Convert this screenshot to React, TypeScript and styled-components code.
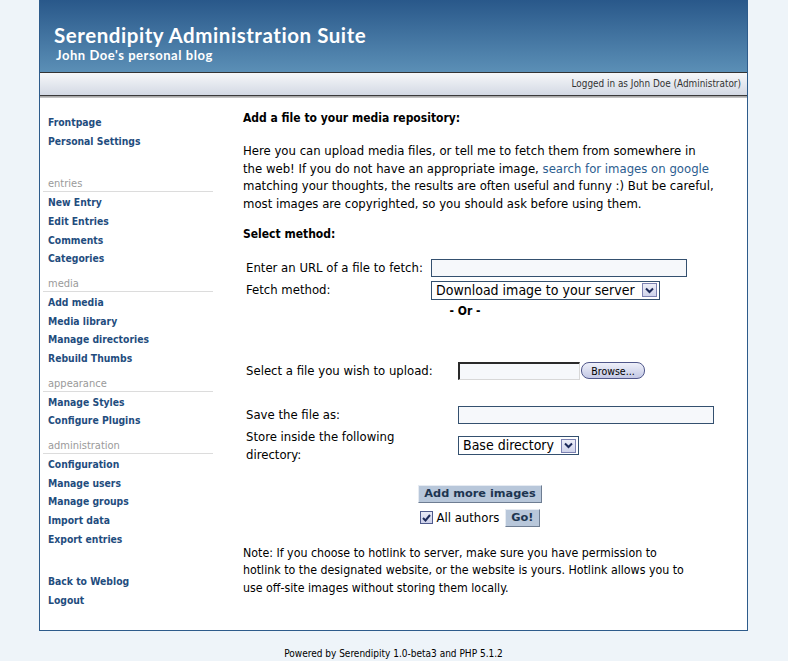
import React from "react";
import styled, { createGlobalStyle } from "styled-components";

const F = `"DejaVu Sans Condensed", "Liberation Sans", sans-serif`;
const TITLE = `Lato, "Open Sans", sans-serif`;

const Global = createGlobalStyle`
  html, body { margin: 0; padding: 0; background: #eef4f9; }
  body { font-family: ${F}; color: #000; overflow: hidden; }
  * { box-sizing: border-box; }
`;

const Page = styled.div`
  width: 709px;
  margin: 0 0 0 39px;
`;

const Frame = styled.div`
  border: 1px solid #2d5b8b;
  border-top: none;
  background: #fff;
`;

const Header = styled.div`
  height: 72px;
  background: linear-gradient(#29588a, #5b8fb6);
  padding: 23px 0 0 14px;
  color: #fff;
  font-family: ${TITLE};
  font-weight: 700;
`;

const Title = styled.div`
  font-size: 20.5px;
  line-height: 24px;
  letter-spacing: 0.55px;
`;

const Subtitle = styled.div`
  font-size: 13px;
  line-height: 16px;
  padding-left: 2px;
  letter-spacing: 0.55px;
`;

const Bar = styled.div`
  height: 24px;
  border-top: 1px solid #333;
  border-bottom: 1px solid #3a3a3a;
  background: linear-gradient(#f6f7f9, #d3d9e4);
  text-align: right;
  padding-right: 6px;
  font-size: 9.9px;
  line-height: 22px;
  color: #333;
`;

const Shade = styled.div`
  height: 2px;
  background: linear-gradient(#9c9c9c, #d0d0d0);
`;

const Body = styled.div`
  display: flex;
`;

const Sidebar = styled.nav`
  width: 174px;
  flex: none;
  padding: 15px 1px 18px 3px;
`;

const LinkList = styled.ul<{ $mt?: number }>`
  list-style: none;
  margin: ${(p) => p.$mt ?? 0}px 0 0;
  padding: 0;
`;

const NavItem = styled.li`
  padding-left: 5px;
  line-height: 18.67px;
  font-size: 10.3px;
  font-weight: 700;
  color: #1f4d7e;
`;

const Section = styled.div<{ $mt: number }>`
  margin-top: ${(p) => p.$mt}px;
`;

const SectionTitle = styled.div`
  padding: 1px 0 0 5px;
  line-height: 14px;
  font-size: 11px;
  color: #9a9a9a;
  border-bottom: 1px solid #dcdcdc;
  margin-bottom: 1px;
`;

const Main = styled.main`
  flex: 1;
  padding: 12px 0 32px 29px;
  width: 503px;
`;

const H = styled.div<{ $mb: number }>`
  font-size: 12px;
  font-weight: 700;
  line-height: 16px;
  margin-bottom: ${(p) => p.$mb}px;
`;

const Para = styled.p<{ $mt: number; $mb: number; $w: number; $fs: number }>`
  margin: ${(p) => p.$mt}px 0 ${(p) => p.$mb}px;
  width: ${(p) => p.$w}px;
  font-size: ${(p) => p.$fs}px;
  line-height: 17.67px;
`;

const A = styled.a`
  color: #2c5d8f;
  text-decoration: none;
`;

const Form = styled.div<{ $w: number; $mt: number }>`
  width: ${(p) => p.$w}px;
  margin-top: ${(p) => p.$mt}px;
  display: flex;
  flex-direction: column;
`;

const Row = styled.div<{ $mt?: number }>`
  display: flex;
  align-items: center;
  margin-top: ${(p) => p.$mt ?? 0}px;
`;

const Label = styled.label<{ $w: number }>`
  width: ${(p) => p.$w}px;
  flex: none;
  padding-left: 3px;
  font-size: 13px;
  line-height: 18px;
`;

const TextBox = styled.input<{ $w: number }>`
  width: ${(p) => p.$w}px;
  height: 18px;
  border: 1px solid #34506f;
  background: #f6f8fb;
  padding: 0 3px;
  margin: 0;
  font-family: ${F};
  font-size: 12px;
  outline: none;
`;

const SelectBox = styled.div<{ $w: number }>`
  width: ${(p) => p.$w}px;
  height: 19px;
  border: 1px solid #34506f;
  background: #fff;
  display: flex;
  align-items: center;
  justify-content: space-between;
  padding: 0 2px 0 4px;
`;

const SelectText = styled.span`
  font-size: 14px;
  line-height: 17px;
  white-space: nowrap;
`;

const Arrow = styled.span`
  width: 15px;
  height: 14px;
  border: 1px solid #7c82b2;
  background: linear-gradient(#eceef8, #cfd3ea);
  display: flex;
  align-items: center;
  justify-content: center;
`;

const OrRow = styled.div`
  text-align: center;
  font-size: 12px;
  font-weight: 700;
  line-height: 16px;
  margin-top: 3px;
`;

const FileBox = styled.input`
  width: 122px;
  height: 18px;
  margin: 0;
  border-style: solid;
  border-width: 2px 1px 1px 2px;
  border-color: #2a2a2a #d8d8d8 #d8d8d8 #2a2a2a;
  background: #f6f8fb;
  outline: none;
`;

const BrowseButton = styled.button`
  margin-left: 1px;
  width: 64px;
  height: 17px;
  border: 1px solid #50578a;
  border-radius: 8px;
  background: linear-gradient(#eef0f9, #c3c8e5);
  font-family: ${F};
  font-size: 10.5px;
  line-height: 14px;
  padding: 0;
  color: #000;
`;

const Center = styled.div<{ $mt: number }>`
  display: flex;
  justify-content: center;
  align-items: center;
  margin-top: ${(p) => p.$mt}px;
  width: 474px;
`;

const Button = styled.button`
  height: 18px;
  padding: 0 5px;
  border-style: solid;
  border-width: 1px;
  border-color: #e6ebf2 #6e7d92 #6e7d92 #e6ebf2;
  background: #b8c7da;
  color: #1d3550;
  font-family: "DejaVu Sans", ${F};
  font-weight: 700;
  font-size: 11.3px;
  line-height: 15px;
`;

const Check = styled.span`
  width: 13px;
  height: 13px;
  border: 1px solid #4e5a8c;
  background: linear-gradient(#e8eaf6, #cdd1ea);
  display: flex;
  align-items: center;
  justify-content: center;
`;

const CheckLabel = styled.span`
  font-size: 13px;
  line-height: 18px;
  margin: 0 6px 0 3px;
`;

const Footer = styled.div`
  text-align: center;
  font-size: 10px;
  line-height: 12px;
  margin-top: 17px;
`;

const nav1 = ["Frontpage", "Personal Settings"];
const sections: { title: string; items: string[] }[] = [
  { title: "entries", items: ["New Entry", "Edit Entries", "Comments", "Categories"] },
  { title: "media", items: ["Add media", "Media library", "Manage directories", "Rebuild Thumbs"] },
  { title: "appearance", items: ["Manage Styles", "Configure Plugins"] },
  {
    title: "administration",
    items: ["Configuration", "Manage users", "Manage groups", "Import data", "Export entries"],
  },
];

const Chevron = () => (
  <svg width="9" height="7" viewBox="0 0 9 7">
    <path d="M1 1.5 L4.5 5 L8 1.5" fill="none" stroke="#1c2a5a" strokeWidth="2" />
  </svg>
);

const Select = ({ w, text }: { w: number; text: string }) => (
  <SelectBox $w={w}>
    <SelectText>{text}</SelectText>
    <Arrow>
      <Chevron />
    </Arrow>
  </SelectBox>
);

export default function App() {
  return (
    <>
      <Global />
      <Page>
        <Frame>
          <Header>
            <Title>Serendipity Administration Suite</Title>
            <Subtitle>John Doe's personal blog</Subtitle>
          </Header>
          <Bar>Logged in as John Doe (Administrator)</Bar>
          <Shade />
          <Body>
            <Sidebar>
              <LinkList>
                {nav1.map((n) => (
                  <NavItem key={n}>{n}</NavItem>
                ))}
              </LinkList>
              {sections.map((s, i) => (
                <Section key={s.title} $mt={i === 0 ? 26 : 8}>
                  <SectionTitle>{s.title}</SectionTitle>
                  <LinkList>
                    {s.items.map((n) => (
                      <NavItem key={n}>{n}</NavItem>
                    ))}
                  </LinkList>
                </Section>
              ))}
              <LinkList $mt={24}>
                <NavItem>Back to Weblog</NavItem>
                <NavItem>Logout</NavItem>
              </LinkList>
            </Sidebar>
            <Main>
              <H $mb={0}>Add a file to your media repository:</H>
              <Para $mt={16} $mb={13} $w={472} $fs={13}>
                Here you can upload media files, or tell me to fetch them from somewhere in
                the web! If you do not have an appropriate image,{" "}
                <A href="#">search for images on google</A> matching your thoughts, the results
                are often useful and funny :) But be careful, most images are copyrighted, so
                you should ask before using them.
              </Para>
              <H $mb={0}>Select method:</H>
              <Form $w={444} $mt={17}>
                <Row>
                  <Label $w={188}>Enter an URL of a file to fetch:</Label>
                  <TextBox $w={256} type="text" />
                </Row>
                <Row $mt={4}>
                  <Label $w={188}>Fetch method:</Label>
                  <Select w={229} text="Download image to your server" />
                </Row>
                <OrRow>- Or -</OrRow>
              </Form>
              <Form $w={474} $mt={43}>
                <Row>
                  <Label $w={215}>Select a file you wish to upload:</Label>
                  <FileBox type="text" readOnly />
                  <BrowseButton type="button">Browse...</BrowseButton>
                </Row>
                <Row $mt={26}>
                  <Label $w={215}>Save the file as:</Label>
                  <TextBox $w={256} type="text" />
                </Row>
                <Row $mt={4}>
                  <Label $w={215}>
                    Store inside the following
                    <br />
                    directory:
                  </Label>
                  <Select w={121} text="Base directory" />
                </Row>
              </Form>
              <Center $mt={21}>
                <Button type="button">Add more images</Button>
              </Center>
              <Center $mt={6}>
                <Check>
                  <svg width="9" height="8" viewBox="0 0 9 8">
                    <path d="M1 4 L3.5 6.5 L8 1" fill="none" stroke="#1c2a5a" strokeWidth="2" />
                  </svg>
                </Check>
                <CheckLabel>All authors</CheckLabel>
                <Button type="button">Go!</Button>
              </Center>
              <Para $mt={18} $mb={0} $w={446} $fs={12.3}>
                Note: If you choose to hotlink to server, make sure you have permission to
                hotlink to the designated website, or the website is yours. Hotlink allows you
                to use off-site images without storing them locally.
              </Para>
            </Main>
          </Body>
        </Frame>
        <Footer>Powered by Serendipity 1.0-beta3 and PHP 5.1.2</Footer>
      </Page>
    </>
  );
}
